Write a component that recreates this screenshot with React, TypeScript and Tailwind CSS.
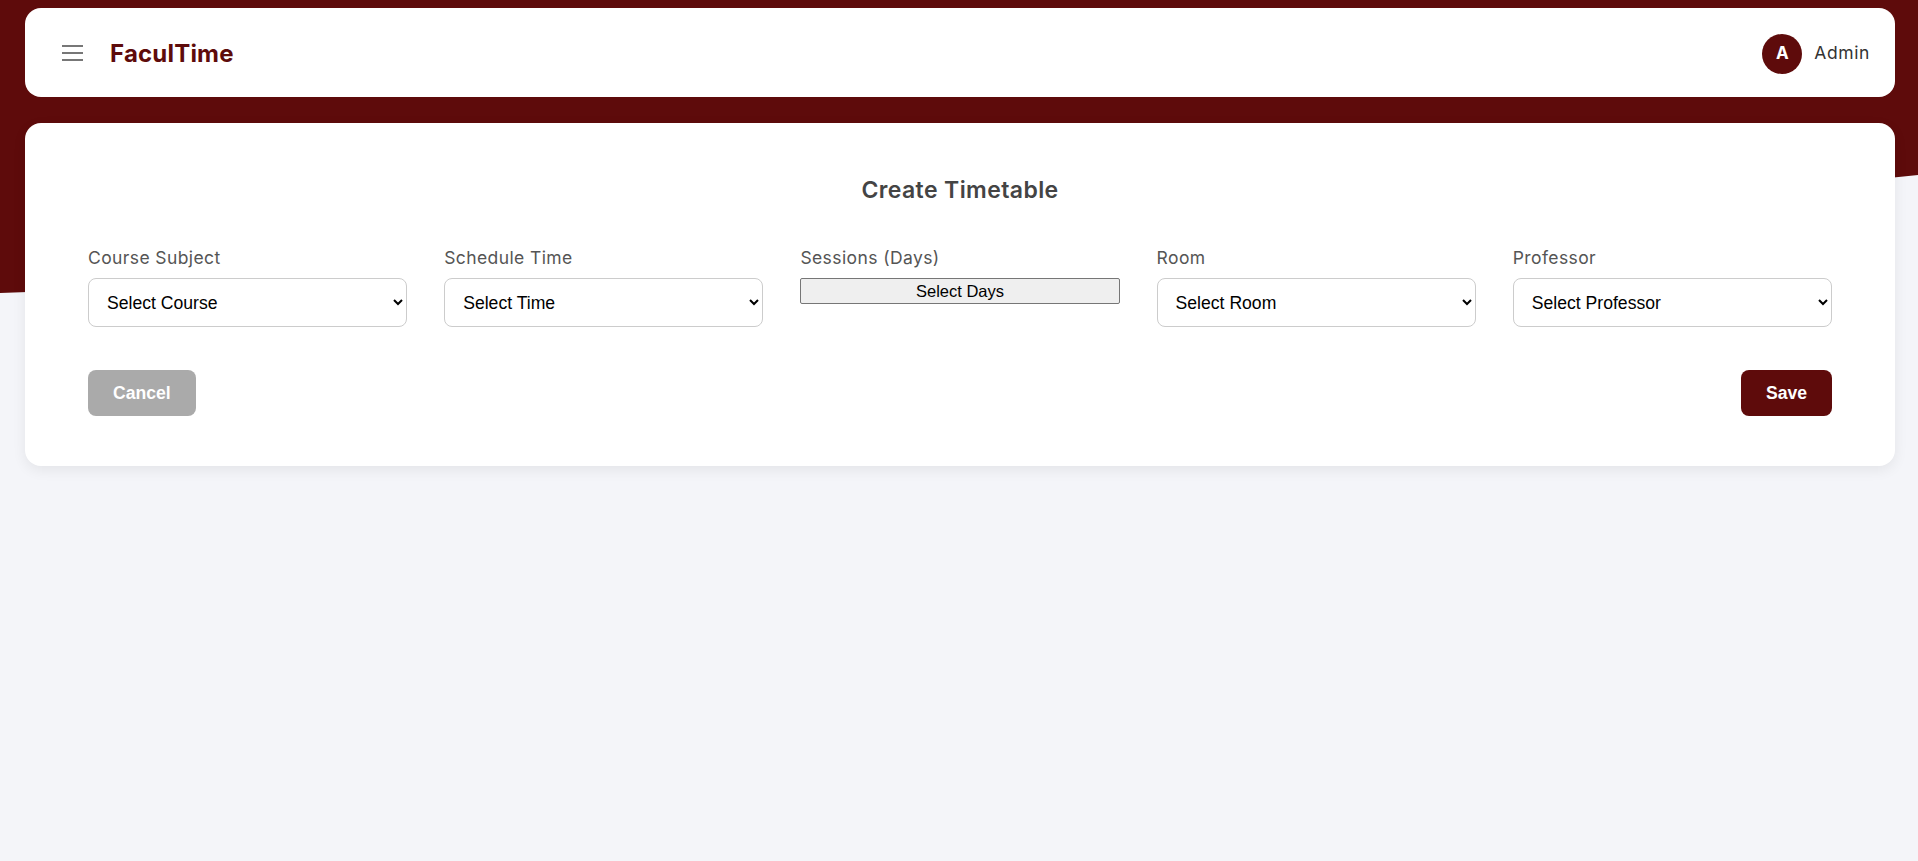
import React from 'react';

const fields = [
  { label: 'Course Subject', placeholder: 'Select Course' },
  { label: 'Schedule Time', placeholder: 'Select Time' },
  { label: 'Sessions (Days)', placeholder: 'Select Days', button: true },
  { label: 'Room', placeholder: 'Select Room' },
  { label: 'Professor', placeholder: 'Select Professor' },
];

function Header() {
  return (
    <header className="flex h-[89px] items-center justify-between rounded-[16px] bg-white pl-[37px] pr-[25px]">
      <div className="flex items-center gap-[27px]">
        <button className="mt-[1px] text-[#555]" aria-label="Menu">
          <svg width="21" height="16" viewBox="0 0 21 16" fill="none" stroke="currentColor" strokeWidth="1.6">
            <line x1="0" y1="1" x2="21" y2="1" />
            <line x1="0" y1="8" x2="21" y2="8" />
            <line x1="0" y1="15" x2="21" y2="15" />
          </svg>
        </button>
        <span className="mt-[2px] text-[24px] font-bold tracking-[0.2px] text-[#5e0b0b]">FaculTime</span>
      </div>
      <div className="mt-[2px] flex items-center gap-[12px]">
        <div className="flex h-[40px] w-[40px] items-center justify-center rounded-full bg-[#5e0b0b] text-[17px] font-bold text-white">
          A
        </div>
        <span className="text-[17.5px] tracking-[0.6px] text-[#333]">Admin</span>
      </div>
    </header>
  );
}

export default function App() {
  return (
    <div className="relative min-h-screen bg-[#f4f5f9] font-['Inter',sans-serif]">
      {/* maroon backdrop with curved bottom edge */}
      <svg
        className="absolute left-0 top-0 h-[300px] w-full"
        viewBox="0 0 1918 300"
        preserveAspectRatio="none"
      >
        <path d="M0 0H1918V175Q1200 250 0 293Z" fill="#5e0b0b" />
      </svg>

      <div className="relative pl-[25px] pr-[23px] pt-[8px]">
        <Header />

        <main className="mt-[26px] rounded-[16px] bg-white px-[63px] pb-[50px] pt-[51px] shadow-[0_4px_14px_rgba(0,0,0,0.07)]">
          <h2 className="text-center text-[23px] font-semibold leading-[33px] tracking-[0.4px] text-[#444]">
            Create Timetable
          </h2>

          <div className="mt-[38px] grid grid-cols-5 gap-[37px]">
            {fields.map((f) => (
              <div key={f.label} className="flex flex-col gap-[7px]">
                <label className="text-[17.5px] leading-[26px] tracking-[0.4px] text-[#555]">{f.label}</label>
                {f.button ? (
                  <button className="h-[26px] w-full rounded-[2px] border border-[#767676] bg-[#efefef] font-['Liberation_Sans',Arial,sans-serif] text-[16.5px] text-black">
                    {f.placeholder}
                  </button>
                ) : (
                  <select className="h-[49px] w-full rounded-[8px] border border-[#ccc] bg-white px-[14px] font-['Liberation_Sans',Arial,sans-serif] text-[17.6px] text-black">
                    <option>{f.placeholder}</option>
                  </select>
                )}
              </div>
            ))}
          </div>

          <div className="mt-[43px] flex items-center justify-between">
            <button className="h-[46px] rounded-[8px] bg-[#aaa] px-[25px] font-['Liberation_Sans',Arial,sans-serif] text-[17.6px] font-bold text-white">
              Cancel
            </button>
            <button className="h-[46px] rounded-[8px] bg-[#5e0b0b] px-[25px] font-['Liberation_Sans',Arial,sans-serif] text-[17.6px] font-bold text-white">
              Save
            </button>
          </div>
        </main>
      </div>
    </div>
  );
}
